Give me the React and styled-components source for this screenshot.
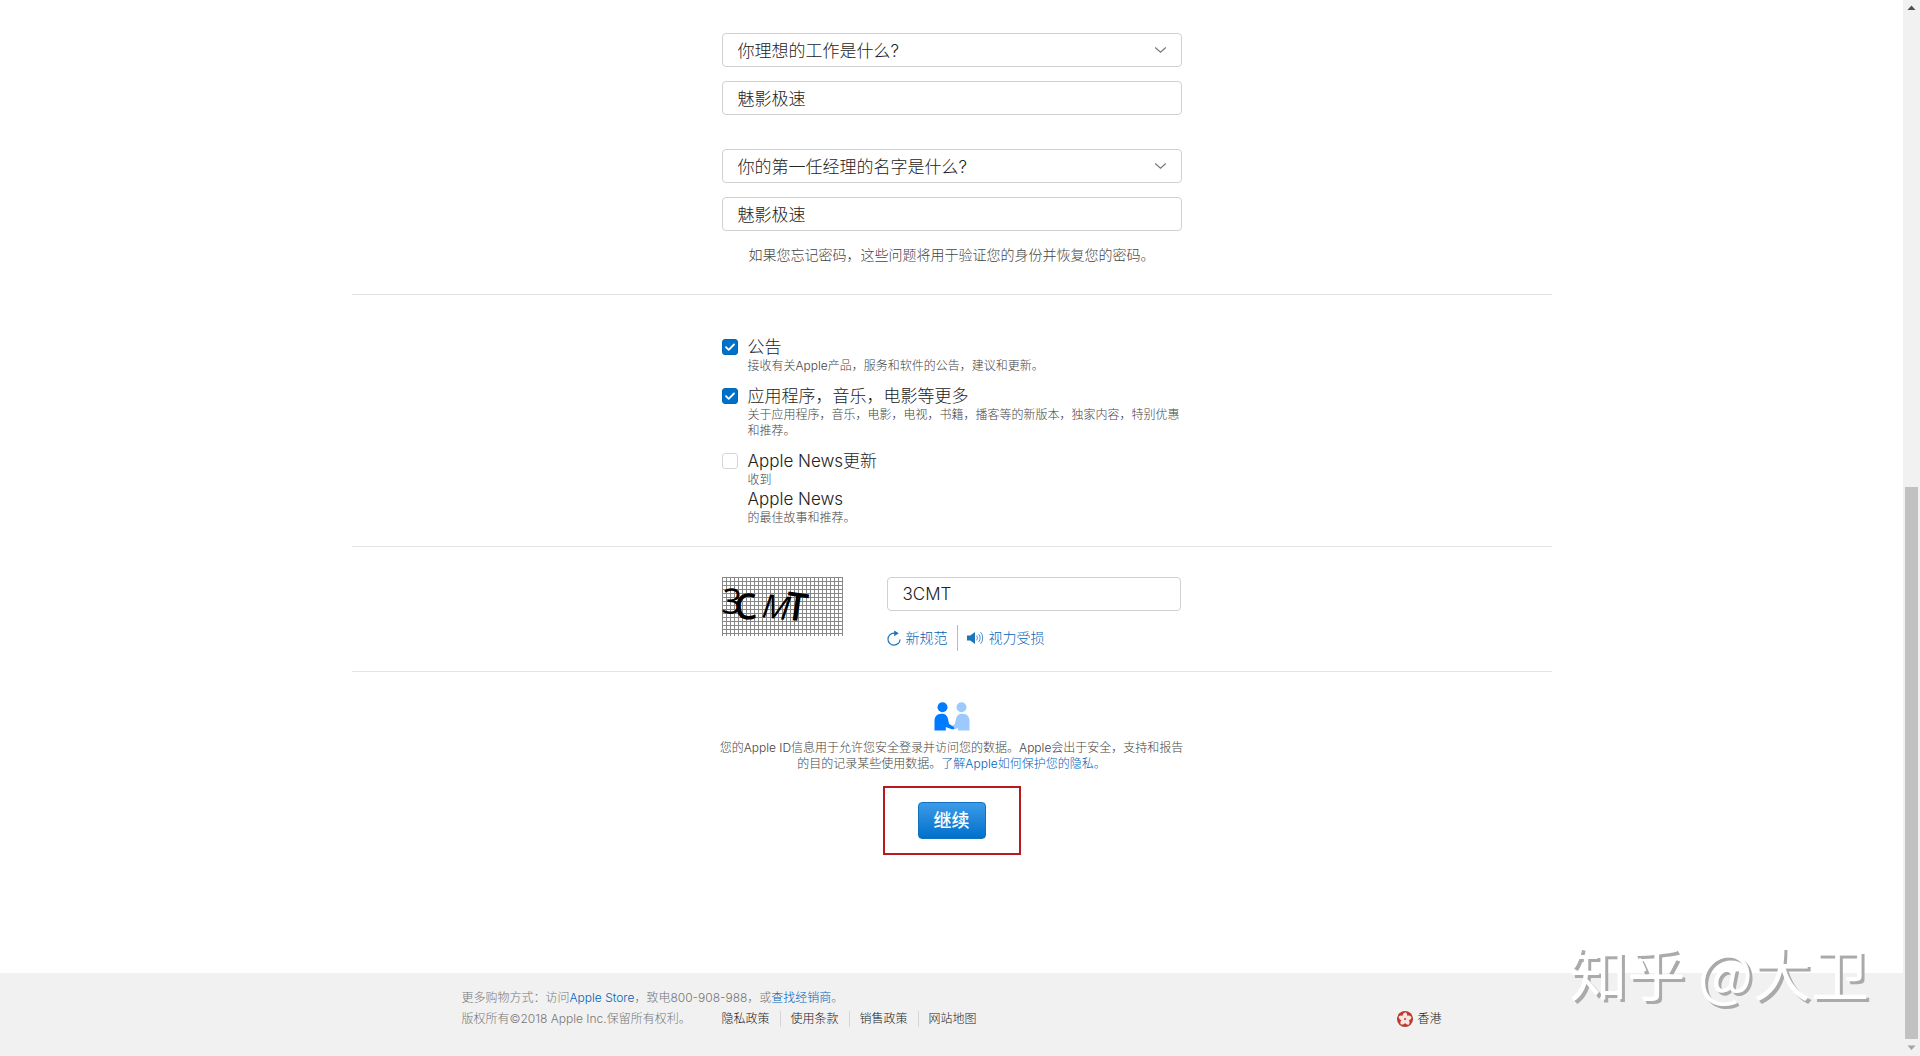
import React, { useState } from "react";
import styled, { createGlobalStyle } from "styled-components";

const GlobalStyle = createGlobalStyle`
  * {
    box-sizing: border-box;
  }
  body {
    margin: 0;
    background: #fff;
    color: #222;
    font-family: Inter, "Noto Sans CJK SC", sans-serif;
    font-size: 17px;
    font-weight: 300;
  }
  input, select, button {
    font: inherit;
    color: inherit;
  }
  a {
    color: #0062b8;
    text-decoration: none;
  }
`;

const Window = styled.div`
  display: flex;
  min-height: 100vh;
`;

const Page = styled.div`
  flex: 1;
  display: flex;
  flex-direction: column;
  position: relative;
`;

const Form = styled.form`
  flex: 1;
  width: 100%;
  max-width: 1200px;
  margin: 0 auto;
`;

const Section = styled.section`
  padding: ${(props) => props.$pad};
  border-bottom: ${(props) => (props.$last ? "none" : "1px solid #e3e3e3")};
`;

const Column = styled.div`
  width: 100%;
  max-width: 460px;
  margin: 0 auto;
`;

const Question = styled.div`
  display: flex;
  flex-direction: column;
  gap: 14px;
  margin-bottom: ${(props) => (props.$last ? "14px" : "34px")};
`;

const SelectWrap = styled.div`
  position: relative;
  svg {
    position: absolute;
    right: 15px;
    top: 13px;
    pointer-events: none;
  }
`;

const Select = styled.select`
  appearance: none;
  display: block;
  width: 100%;
  height: 34px;
  padding: 2px 40px 0 15px;
  background: #fff;
  border: 1px solid #d0d0d0;
  border-radius: 4px;
`;

const TextInput = styled.input`
  display: block;
  width: 100%;
  height: 34px;
  padding: 0 15px 2px;
  background: #fff;
  border: 1px solid #d0d0d0;
  border-radius: 4px;
`;

const CodeInput = styled(TextInput)`
  padding-bottom: 0;
`;

const Hint = styled.p`
  margin: 0;
  padding-left: 27px;
  color: #444;
  font-size: 14px;
  line-height: 20px;
`;

const Option = styled.div`
  display: flex;
  gap: 10px;
  margin-bottom: ${(props) => (props.$last ? "0" : "11px")};
`;

const Checkbox = styled.input`
  appearance: none;
  flex: none;
  width: 16px;
  height: 16px;
  margin: 3px 0 0;
  border: 1px solid #d6d6d6;
  border-radius: 3px;
  background: #fff;
  &:checked {
    border-color: #0066bc;
    background: #0070c9
      url("data:image/svg+xml,%3Csvg xmlns='http://www.w3.org/2000/svg' viewBox='0 0 14 14'%3E%3Cpath d='M3 7.2l2.7 2.6 5.3-5.3' fill='none' stroke='%23fff' stroke-width='1.8' stroke-linecap='round' stroke-linejoin='round'/%3E%3C/svg%3E")
      center / 14px no-repeat;
  }
`;

const OptionTitle = styled.label`
  display: block;
  line-height: 22px;
`;

const OptionText = styled.div`
  color: #444;
  font-size: 12px;
  line-height: 16px;
`;

const OptionProduct = styled.div`
  line-height: 22px;
`;

const CaptchaRow = styled.div`
  display: flex;
  align-items: flex-start;
  justify-content: space-between;
  padding-right: 1px;
`;

const CaptchaSide = styled.div`
  width: 294px;
`;

const CaptchaLinks = styled.div`
  display: flex;
  align-items: center;
  margin-top: 14px;
  font-size: 14px;
  line-height: 26px;
`;

const CaptchaLink = styled.a`
  display: flex;
  align-items: center;
  gap: 5px;
  & + & {
    margin-left: 9px;
    padding-left: 9px;
    border-left: 1px solid #bbb;
  }
`;

const Privacy = styled.div`
  display: flex;
  flex-direction: column;
  align-items: center;
  text-align: center;
`;

const PrivacyText = styled.p`
  width: 100%;
  max-width: 470px;
  margin: 9px 0 14px;
  color: #444;
  font-size: 12px;
  line-height: 16px;
`;

const Highlight = styled.div`
  padding: 14px 33px;
  border: 2px solid #b8191e;
`;

const Submit = styled.button`
  display: block;
  height: 37px;
  padding: 0 15px 4px;
  border: 1px solid #1173bf;
  border-radius: 4px;
  background: linear-gradient(#3d9be8, #0070cb);
  color: #fff;
  font-size: 18px;
  font-weight: 500;
`;

const Footer = styled.footer`
  padding: 14px 20px 27px;
  background: #f1f1f1;
  color: #777;
  font-size: 12px;
  line-height: 21px;
`;

const FooterInner = styled.div`
  width: 100%;
  max-width: 980px;
  margin: 0 auto;
`;

const FooterRow = styled.div`
  display: flex;
  align-items: center;
`;

const Copyright = styled.span`
  width: 260px;
`;

const FooterLinks = styled.nav`
  display: flex;
  flex: 1;
  line-height: 16px;
`;

const FooterLink = styled.a`
  color: #222;
  & + & {
    margin-left: 10px;
    padding-left: 10px;
    border-left: 1px solid #d6d6d6;
  }
`;

const Region = styled.a`
  display: flex;
  align-items: center;
  gap: 4px;
  color: #222;
`;

const Watermark = styled.div`
  position: absolute;
  right: 34px;
  bottom: 43px;
  color: #fff;
  font-family: "Noto Sans CJK SC", sans-serif;
  font-size: 58px;
  font-weight: 400;
  line-height: 84px;
  text-shadow: 3px 3px 0 #aaa;
  pointer-events: none;
`;

const ScrollBar = styled.div`
  display: flex;
  flex-direction: column;
  align-items: center;
  width: 17px;
  background: #f1f1f1;
`;

const ScrollArrow = styled.svg`
  width: 17px;
  height: 17px;
  fill: ${(props) => (props.$active ? "#505050" : "#a3a3a3")};
`;

const ScrollSpace = styled.div`
  flex: 470;
`;

const ScrollThumb = styled.div`
  flex: 552;
  width: 13px;
  background: #c1c1c1;
`;

const Chevron = () => (
  <svg width="13" height="8" viewBox="0 0 13 8" aria-hidden="true">
    <path d="M1.2 1.5l5.3 4.8 5.3-4.8" fill="none" stroke="#777" strokeWidth="1.2" />
  </svg>
);

const CaptchaImage = ({ code }) => {
  const letters = [
    { x: -1, y: 36, size: 35, angle: 4, weight: 400 },
    { x: 13, y: 43, size: 36, angle: -3, weight: 600 },
    { x: 39, y: 40, size: 33, angle: 7, weight: 500, style: "italic" },
    { x: 62, y: 42, size: 39, angle: 8, weight: 600 },
  ];
  return (
    <svg width="121" height="59" viewBox="0 0 121 59" role="img" aria-label={code}>
      <defs>
        <pattern id="grid" width="4" height="4" patternUnits="userSpaceOnUse">
          <path d="M.5 0v4M0 .5h4" stroke="#888" strokeWidth="1" />
        </pattern>
      </defs>
      <rect width="121" height="59" fill="url(#grid)" />
      {letters.map(({ x, y, size, angle, weight, style }, i) => (
        <text
          key={code[i]}
          x={x}
          y={y}
          transform={`rotate(${angle} ${x} ${y})`}
          fontFamily="Open Sans, sans-serif"
          fontSize={size}
          fontWeight={weight}
          fontStyle={style}
        >
          {code[i]}
        </text>
      ))}
    </svg>
  );
};

const RefreshIcon = () => (
  <svg width="14" height="16" viewBox="0 0 14 16" aria-hidden="true">
    <path d="M8.8 3.2H7a6 6 0 1 0 6 6.2" fill="none" stroke="#1b75bb" strokeWidth="1.2" />
    <path d="M7.2.4l4.6 2.9-4.6 3z" fill="#1b75bb" />
  </svg>
);

const SpeakerIcon = () => (
  <svg width="17" height="14" viewBox="0 0 17 14" aria-hidden="true">
    <path d="M0 4.500h3.200L8 1v12L3.200 9.500H0z" fill="#1b75bb" />
    <path
      d="M9.600 4.600a4 4 0 0 1 0 4.800M11.600 3a6.500 6.500 0 0 1 0 8M13.600 1.200a9 9 0 0 1 0 11.600"
      fill="none"
      stroke="#1b75bb"
      strokeWidth=".8"
    />
  </svg>
);

const HandshakeIcon = () => (
  <svg width="36" height="29" viewBox="0 0 36 29" aria-hidden="true">
    <g fill="#9ccaff">
      <circle cx="27.500" cy="5.300" r="5" />
      <path d="M35.500 28.500V19c0-4.500-2.500-7.300-7-7.300-4 0-5.900 2-6.500 5.300l-1.200 5.200-4.300 2.500c1.200 2.400 2.800 3 4.600 2.500l2.900-1.200v2.500z" />
    </g>
    <g fill="#007aff">
      <circle cx="8.500" cy="5.300" r="5" />
      <path d="M.5 28.500V19c0-4.500 2.500-7.300 7-7.300 4 0 5.900 2 6.500 5.300l1 4.800 4.700 3.100c1.200.9.200 2.700-1.800 2.400l-6.100-2.300v3.500z" />
    </g>
  </svg>
);

const HongKongFlag = () => (
  <svg width="16" height="16" viewBox="0 0 16 16" aria-hidden="true">
    <circle cx="8" cy="8" r="8" fill="#b93a30" />
    <g fill="#fbe3df">
      {[0, 72, 144, 216, 288].map((angle) => (
        <path
          key={angle}
          d="M8 8C4.600 6.500 4.800 2.500 8.300 1.200c2.800 1.500 2.400 4.800-.3 6.800z"
          transform={`rotate(${angle} 8 8)`}
        />
      ))}
    </g>
    <circle cx="8" cy="8" r="1" fill="#b93a30" />
  </svg>
);

const questions = [
  { id: "job", text: "你理想的工作是什么?", answer: "魅影极速" },
  { id: "manager", text: "你的第一任经理的名字是什么?", answer: "魅影极速" },
];

const footerLinks = ["隐私政策", "使用条款", "销售政策", "网站地图"];

const App = () => {
  const [news, setNews] = useState({ notice: true, apps: true, apple: false });

  const toggle = (e) => {
    setNews({ ...news, [e.target.id]: e.target.checked });
  };

  return (
    <Window lang="zh-CN">
      <GlobalStyle />
      <Page>
        <Form onSubmit={(e) => e.preventDefault()}>
          <Section $pad="33px 0 29px">
            <Column>
              {questions.map(({ id, text, answer }, index) => (
                <Question key={id} $last={index === questions.length - 1}>
                  <SelectWrap>
                    <Select aria-label="安全提示问题" defaultValue={text}>
                      <option>{text}</option>
                    </Select>
                    <Chevron />
                  </SelectWrap>
                  <TextInput aria-label="答案" defaultValue={answer} />
                </Question>
              ))}
              <Hint>如果您忘记密码，这些问题将用于验证您的身份并恢复您的密码。</Hint>
            </Column>
          </Section>

          <Section $pad="41px 0 20px">
            <Column>
              <Option>
                <Checkbox type="checkbox" id="notice" checked={news.notice} onChange={toggle} />
                <div>
                  <OptionTitle htmlFor="notice">公告</OptionTitle>
                  <OptionText>接收有关Apple产品，服务和软件的公告，建议和更新。</OptionText>
                </div>
              </Option>
              <Option>
                <Checkbox type="checkbox" id="apps" checked={news.apps} onChange={toggle} />
                <div>
                  <OptionTitle htmlFor="apps">应用程序，音乐，电影等更多</OptionTitle>
                  <OptionText>
                    关于应用程序，音乐，电影，电视，书籍，播客等的新版本，独家内容，特别优惠和推荐。
                  </OptionText>
                </div>
              </Option>
              <Option $last>
                <Checkbox type="checkbox" id="apple" checked={news.apple} onChange={toggle} />
                <div>
                  <OptionTitle htmlFor="apple">Apple News更新</OptionTitle>
                  <OptionText>收到</OptionText>
                  <OptionProduct>Apple News</OptionProduct>
                  <OptionText>的最佳故事和推荐。</OptionText>
                </div>
              </Option>
            </Column>
          </Section>

          <Section $pad="30px 0 20px">
            <Column>
              <CaptchaRow>
                <CaptchaImage code="3CMT" />
                <CaptchaSide>
                  <CodeInput aria-label="验证码" defaultValue="3CMT" />
                  <CaptchaLinks>
                    <CaptchaLink href="#refresh">
                      <RefreshIcon />
                      新规范
                    </CaptchaLink>
                    <CaptchaLink href="#audio">
                      <SpeakerIcon />
                      视力受损
                    </CaptchaLink>
                  </CaptchaLinks>
                </CaptchaSide>
              </CaptchaRow>
            </Column>
          </Section>

          <Section $pad="30px 0" $last>
            <Privacy>
              <HandshakeIcon />
              <PrivacyText>
                您的Apple ID信息用于允许您安全登录并访问您的数据。Apple会出于安全，支持和报告的目的记录某些使用数据。
                <a href="#privacy">了解Apple如何保护您的隐私。</a>
              </PrivacyText>
              <Highlight>
                <Submit type="submit">继续</Submit>
              </Highlight>
            </Privacy>
          </Section>
        </Form>

        <Footer>
          <FooterInner>
            <FooterRow>
              <span>
                更多购物方式：访问<a href="#store">Apple Store</a>，致电800-908-988，或
                <a href="#reseller">查找经销商</a>。
              </span>
            </FooterRow>
            <FooterRow>
              <Copyright>版权所有©2018 Apple Inc.保留所有权利。</Copyright>
              <FooterLinks>
                {footerLinks.map((name) => (
                  <FooterLink key={name} href="#footer">
                    {name}
                  </FooterLink>
                ))}
              </FooterLinks>
              <Region href="#region">
                <HongKongFlag />
                香港
              </Region>
            </FooterRow>
          </FooterInner>
        </Footer>
        <Watermark>知乎 @大卫</Watermark>
      </Page>

      <ScrollBar aria-hidden="true">
        <ScrollArrow $active viewBox="0 0 17 17">
          <path d="M8.500 5.500l4 4.500h-8z" />
        </ScrollArrow>
        <ScrollSpace />
        <ScrollThumb />
        <ScrollArrow viewBox="0 0 17 17">
          <path d="M8.500 11l4-4.500h-8z" />
        </ScrollArrow>
      </ScrollBar>
    </Window>
  );
};

export default App;
